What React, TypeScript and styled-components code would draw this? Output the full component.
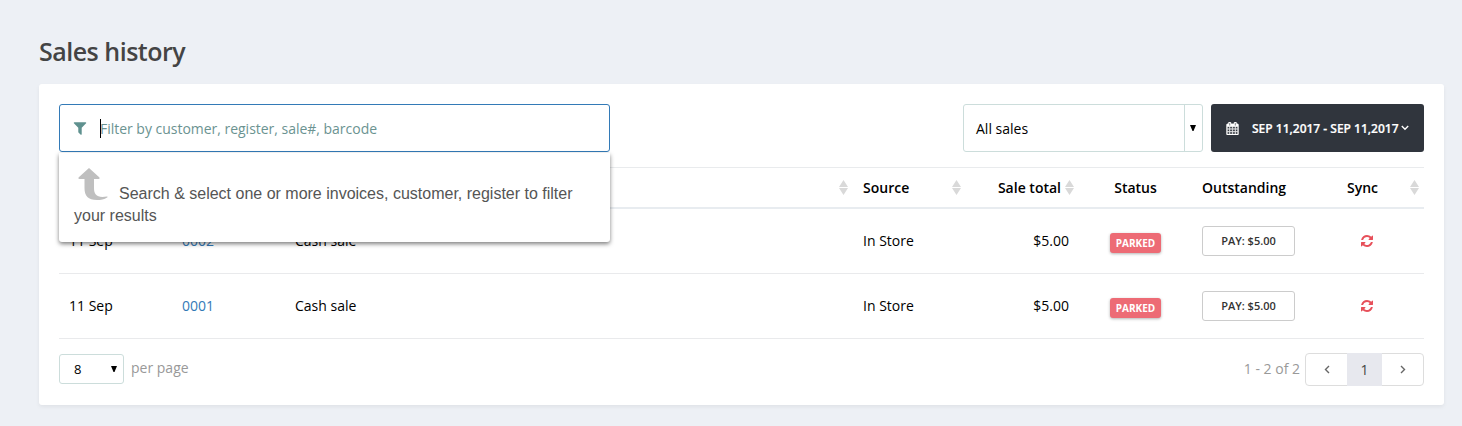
import React from 'react';
import styled, { createGlobalStyle, css } from 'styled-components';

const GlobalStyle = createGlobalStyle`
  *, *::before, *::after { box-sizing: border-box; }
  html { background: #edf0f5; }
  body {
    margin: 0;
    font-family: 'Open Sans', sans-serif;
    font-size: 14px;
    line-height: 20px;
    color: #000;
  }
  button, input { font-family: inherit; margin: 0; }
`;

const Page = styled.main`
  min-height: 426px;
  padding: 35px 18px 0 39px;
`;

const Title = styled.h1`
  margin: 0 0 16px;
  height: 33px;
  font-size: 25px;
  line-height: 33px;
  font-weight: 600;
  letter-spacing: -0.5px;
  color: #444;
`;

const Card = styled.section`
  height: 321px;
  padding: 20px;
  background: #fff;
  border-radius: 3px;
  box-shadow: 0 2px 4px rgba(0, 0, 0, 0.06);
`;

const Toolbar = styled.div`
  display: flex;
  height: 48px;
  margin-bottom: 15px;
`;

const Search = styled.div`
  position: relative;
  display: flex;
  align-items: center;
  width: 551px;
  margin-right: auto;
  padding-left: 12px;
  border: 1px solid #337ab7;
  border-radius: 3px;
`;

const Caret = styled.span`
  width: 1px;
  height: 19px;
  margin-left: 12px;
  background: #000;
`;

const Placeholder = styled.span`
  padding-top: 2px;
  margin-left: -1px;
  letter-spacing: -0.02px;
  color: #6b9391;
`;

const Hint = styled.div`
  position: absolute;
  z-index: 2;
  top: 48px;
  left: -1px;
  width: 551px;
  height: 89px;
  padding: 15px;
  background: #fff;
  border-radius: 0 0 3px 3px;
  box-shadow: 0 2px 4px rgba(0, 0, 0, 0.5);
  font: 16px/22px 'Liberation Sans', sans-serif;
  color: #555;

  svg { margin: 0 11px 0 4px; vertical-align: -1px; }
`;

const SelectBox = styled.div`
  display: flex;
  width: 240px;
  margin-right: 8px;
  border: 1px solid #ccdddb;
  border-radius: 3px;
`;

const SelectValue = styled.span`
  flex: 1;
  padding-left: 12px;
  line-height: 48px;
`;

const SelectArrow = styled.span`
  display: flex;
  align-items: center;
  width: 18px;
  padding-left: 5px;
  border-left: 1px solid #ccdddb;
`;

const DateButton = styled.button`
  display: flex;
  align-items: center;
  width: 213px;
  padding: 0 0 0 15px;
  border: 0;
  border-radius: 3px;
  background: #30353d;
  color: #fff;
  font-size: 12px;
  font-weight: 600;
  white-space: nowrap;
`;

const DateText = styled.span`
  margin: 0 2px 0 13px;
  -webkit-text-stroke: 0.2px #fff;
`;

const columns = css`
  display: grid;
  grid-template-columns: 113px 113px 568px 113px 113px 113px 118px 114px;
  align-items: center;
`;

const HeaderRow = styled.div`
  ${columns}
  height: 42px;
  border-top: 1px solid #e9ebed;
  border-bottom: 2px solid #e8ecf0;
`;

const Row = styled.div`
  ${columns}
  height: 65px;
  border-bottom: 1px solid #e9eaec;
`;

const Cell = styled.div<{ $align?: 'left' | 'right' | 'center' }>`
  display: flex;
  align-items: center;
  padding: 0 10px;
  white-space: nowrap;
  justify-content: ${({ $align }) =>
    $align === 'right' ? 'flex-end' : $align === 'center' ? 'center' : 'flex-start'};
`;

const HeadCell = styled(Cell)<{ $sort?: boolean; $indent?: number }>`
  padding-left: ${({ $indent }) => $indent ?? 10}px;
  padding-right: ${({ $sort }) => ($sort ? '5px' : '10px')};
  font-weight: 600;
`;

const SortIcon = styled.svg<{ $tight?: boolean }>`
  margin-left: ${({ $tight }) => ($tight ? '4px' : 'auto')};
`;

const SaleLink = styled.a`
  color: #337ab7;
`;

const Badge = styled.span`
  height: 20px;
  margin-top: 4px;
  padding: 0 6px;
  border-radius: 3px;
  background: #ed6b75;
  box-shadow: 0 1px 3px rgba(0, 0, 0, 0.3);
  color: #fff;
  font-size: 10px;
  line-height: 20px;
  font-weight: 700;
`;

const PayButton = styled.button`
  width: 93px;
  height: 30px;
  padding: 0 0 1px;
  border: 1px solid #ccc;
  border-radius: 3px;
  background: #fff;
  color: #333;
  font-size: 11px;
  font-weight: 600;
`;

const Footer = styled.footer`
  display: flex;
  align-items: flex-start;
  height: 48px;
  padding-top: 14px;
  color: #999;
`;

const SizeSelect = styled.div`
  display: flex;
  align-items: center;
  justify-content: space-between;
  width: 65px;
  height: 30px;
  margin: 1px 7px 0 0;
  padding: 0 6px 0 14px;
  border: 1px solid #ccdddb;
  border-radius: 3px;
  color: #000;
  font-size: 13px;
`;

const FooterText = styled.span<{ $end?: boolean }>`
  margin: ${({ $end }) => ($end ? '6px 5px 0 auto' : '5px 0 0')};
`;

const Pager = styled.nav`
  display: flex;
  width: 119px;
  height: 33px;
  border: 1px solid #ddd;
  border-radius: 4px;
`;

const PageItem = styled.span<{ $active?: boolean }>`
  display: flex;
  align-items: center;
  justify-content: center;
  flex: ${({ $active }) => ($active ? '0 0 35px' : '1')};
  margin: ${({ $active }) => ($active ? '-1px 0' : '0')};
  background: ${({ $active }) => ($active ? '#e7e8ee' : 'transparent')};
  color: #444;
`;

function Glyph({ d, size, color }: { d: string; size: number; color: string }) {
  return (
    <svg width={size} height={size} viewBox="0 0 1792 1792" fill={color}>
      <path d={d} />
    </svg>
  );
}

const FILTER =
  'M1595 295q17 41-14 70l-493 493v742q0 42-39 59-13 5-25 5-27 0-45-19l-256-256q-19-19-19-45v-486l-493-493q-31-29-14-70 17-39 59-39h1280q42 0 59 39z';
const REFRESH =
  'M1639 1056q0 5-1 7-64 268-268 434.500t-478 166.500q-146 0-282.500-55t-243.500-157l-129 129q-19 19-45 19t-45-19-19-45v-448q0-26 19-45t45-19h448q26 0 45 19t19 45-19 45l-137 137q71 66 161 102t187 36q134 0 250-65t186-179q11-17 53-117 8-23 30-23h192q13 0 22.500 9.500t9.500 22.500zm25-800v448q0 26-19 45t-45 19h-448q-26 0-45-19t-19-45 19-45l138-138q-148-137-349-137-134 0-250 65t-186 179q-11 17-53 117-8 23-30 23h-199q-13 0-22.500-9.500t-9.500-22.500v-7q65-268 270-434.500t480-166.500q146 0 284 55.500t245 156.500l130-129q19-19 45-19t45 19 19 45z';
const CALENDAR =
  'M192 1664h288v-288h-288v288zm352 0h320v-288h-320v288zm-352-352h288v-320h-288v320zm352 0h320v-320h-320v320zm-352-384h288v-288h-288v288zm736 736h320v-288h-320v288zm-384-736h320v-288h-320v288zm768 736h288v-288h-288v288zm-384-352h320v-320h-320v320zm-352-864v-288q0-13-9.500-22.500t-22.500-9.500h-64q-13 0-22.500 9.500t-9.500 22.500v288q0 13 9.500 22.500t22.500 9.500h64q13 0 22.500-9.500t9.500-22.500zm736 864h288v-320h-288v320zm-384-384h320v-288h-320v288zm384 0h288v-288h-288v288zm32-480v-288q0-13-9.500-22.500t-22.500-9.500h-64q-13 0-22.500 9.500t-9.500 22.500v288q0 13 9.500 22.500t22.500 9.500h64q13 0 22.500-9.500t9.500-22.500zm384-64v1280q0 52-38 90t-90 38h-1408q-52 0-90-38t-38-90v-1280q0-52 38-90t90-38h128v-96q0-66 47-113t113-47h64q66 0 113 47t47 113v96h384v-96q0-66 47-113t113-47h64q66 0 113 47t47 113v96h128q52 0 90 38t38 90z';

function CalendarIcon() {
  return (
    <svg width="13" height="13" viewBox="0 0 1792 1792" fill="#fff" stroke="#fff" strokeWidth="50">
      <path d={CALENDAR} />
    </svg>
  );
}

function Sort({ tight }: { tight?: boolean }) {
  return (
    <SortIcon $tight={tight} width="9" height="15" viewBox="0 0 9 15" fill="#d9d9d9">
      <path d="M4.500 0 9 7H0zM0 8h9l-4.500 7z" />
    </SortIcon>
  );
}

function DropArrow() {
  return (
    <svg width="6" height="6" viewBox="0 0 6 6">
      <path d="M0 0h6L3.500 6h-1z" />
    </svg>
  );
}

function Chevron({ d, width, height, color }: { d: string; width: number; height: number; color: string }) {
  return (
    <svg width={width} height={height} viewBox={`0 0 ${width} ${height}`} fill="none" stroke={color} strokeWidth="1.4">
      <path d={d} />
    </svg>
  );
}

const sales = [
  { date: '11 Sep', number: '0002' },
  { date: '11 Sep', number: '0001' },
];

export default function App() {
  return (
    <>
      <GlobalStyle />
      <Page>
        <Title>Sales history</Title>
        <Card>
          <Toolbar>
            <Search>
              <Glyph d={FILTER} size={16} color="#5f918f" />
              <Caret />
              <Placeholder>Filter by customer, register, sale#, barcode</Placeholder>
              <Hint>
                <svg width="30" height="32" viewBox="0 0 30 32" fill="#bfbfbf">
                  <path d="M11 0 21.500 9.500Q22 11 20.500 11H16V20C16 27 19 30 29 28.500Q30 28.500 29.500 29.200C26 31.500 23 32 19 32C10 32 6.500 28 6.500 20V11H1.500Q0 11 .5 9.500Z" />
                </svg>
                Search &amp; select one or more invoices, customer, register to filter your results
              </Hint>
            </Search>
            <SelectBox>
              <SelectValue>All sales</SelectValue>
              <SelectArrow><DropArrow /></SelectArrow>
            </SelectBox>
            <DateButton>
              <CalendarIcon />
              <DateText>SEP 11,2017 - SEP 11,2017</DateText>
              <Chevron d="M.8 1 4 4.200 7.200 1" width={8} height={6} color="#fff" />
            </DateButton>
          </Toolbar>

          <HeaderRow>
            <HeadCell />
            <HeadCell />
            <HeadCell $sort><Sort /></HeadCell>
            <HeadCell $sort>Source<Sort /></HeadCell>
            <HeadCell $sort $align="right">Sale total<Sort tight /></HeadCell>
            <HeadCell $align="center">Status</HeadCell>
            <HeadCell>Outstanding</HeadCell>
            <HeadCell $sort $indent={37}>Sync<Sort /></HeadCell>
          </HeaderRow>
          {sales.map((sale) => (
            <Row key={sale.number}>
              <Cell>{sale.date}</Cell>
              <Cell><SaleLink>{sale.number}</SaleLink></Cell>
              <Cell>Cash sale</Cell>
              <Cell>In Store</Cell>
              <Cell $align="right">$5.00</Cell>
              <Cell $align="center"><Badge>PARKED</Badge></Cell>
              <Cell><PayButton>PAY: $5.00</PayButton></Cell>
              <Cell $align="center"><Glyph d={REFRESH} size={14} color="#e7505a" /></Cell>
            </Row>
          ))}

          <Footer>
            <SizeSelect>8<DropArrow /></SizeSelect>
            <FooterText>per page</FooterText>
            <FooterText $end>1 - 2 of 2</FooterText>
            <Pager>
              <PageItem><Chevron d="M5 1 1.500 4.500 5 8" width={6} height={9} color="#666" /></PageItem>
              <PageItem $active>1</PageItem>
              <PageItem><Chevron d="M1 1 4.500 4.500 1 8" width={6} height={9} color="#666" /></PageItem>
            </Pager>
          </Footer>
        </Card>
      </Page>
    </>
  );
}
